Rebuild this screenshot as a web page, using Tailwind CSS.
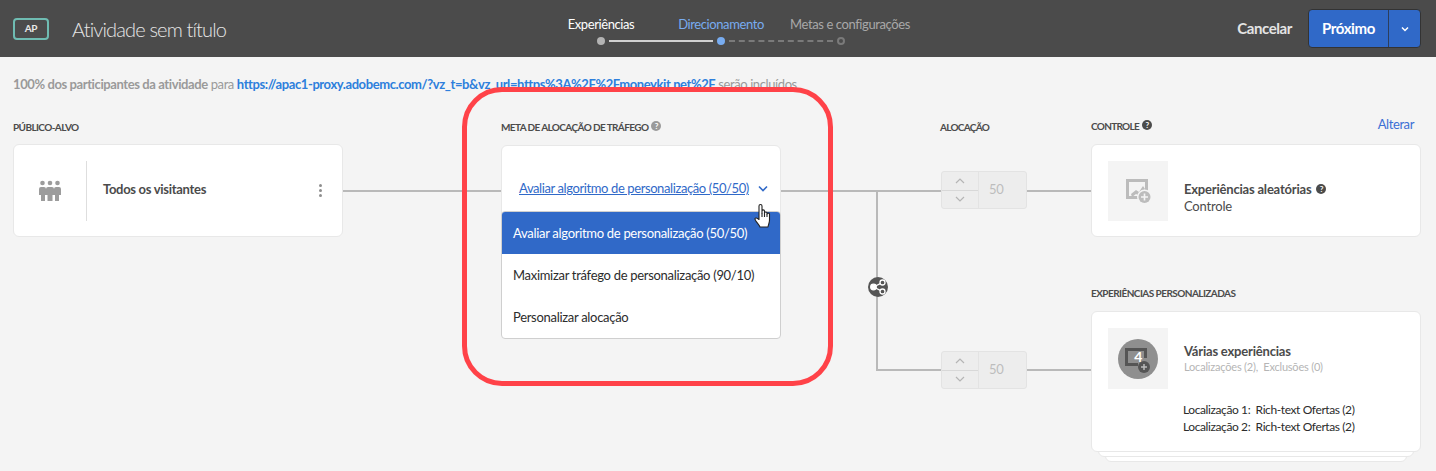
<!DOCTYPE html>
<html lang="pt">
<head>
  <meta charset="UTF-8">
  <title>Atividade sem título</title>
  <script src="https://cdn.jsdelivr.net/npm/@tailwindcss/browser@4"></script>
</head>
<body class="bg-[#f4f4f4] font-['Lato',sans-serif] text-[#4b4b4b] overflow-hidden tracking-[-0.4px]">
  <!-- Header -->
  <header class="h-[57px] bg-[#4b4b4b] flex items-center">
    <div class="w-[541px] flex items-center pl-[13px]">
      <div class="w-[36px] h-[22px] border-2 border-[#6fbcb2] rounded-[4px] flex items-center justify-center text-[10px] font-bold text-[#e8e8e8]">AP</div>
      <span class="ml-[23px] text-[20px] font-light text-[#e6e6e6] tracking-[-0.85px]">Atividade sem título</span>
    </div>
    <!-- Stepper -->
    <div class="w-[360px] grid grid-cols-3 self-start pt-[16px]">
      <div class="flex flex-col items-center">
        <span class="text-[13px] leading-[17px] text-white whitespace-nowrap">Experiências</span>
        <div class="mt-[3px] h-[10px] w-full flex items-center justify-center relative">
          <span class="w-[8px] h-[8px] rounded-full bg-[#b3b3b3]"></span>
          <span class="absolute left-[68px] w-[104px] h-[2px] bg-[#d0d0d0]"></span>
        </div>
      </div>
      <div class="flex flex-col items-center">
        <span class="text-[13px] leading-[17px] text-[#78acf0] whitespace-nowrap">Direcionamento</span>
        <div class="mt-[3px] h-[10px] w-full flex items-center justify-center relative">
          <span class="w-[8px] h-[8px] rounded-full bg-[#78acf0]"></span>
          <span class="absolute left-[68px] w-[104px] border-t-2 border-dashed border-[#7a7a7a]"></span>
        </div>
      </div>
      <div class="flex flex-col items-center">
        <span class="text-[13px] leading-[17px] text-[#a8a8a8] whitespace-nowrap ml-[18px]">Metas e configurações</span>
        <div class="mt-[3px] h-[10px] w-full flex items-center justify-center">
          <span class="w-[8px] h-[8px] rounded-full border-2 border-[#7a7a7a]"></span>
        </div>
      </div>
    </div>
    <div class="flex-1 flex items-center justify-end pr-[15px]">
      <span class="text-[15px] font-bold text-[#e4e4e4] mr-[16px]">Cancelar</span>
      <div class="h-[39px] w-[113px] flex rounded-[4px] bg-[#3069c8] border border-[#333] text-white">
        <span class="w-[80px] flex items-center justify-center text-[15px] font-bold border-r border-[#2c3e5c]">Próximo</span>
        <span class="flex-1 flex items-center justify-center">
          <svg width="8" height="6" viewBox="0 0 8 6" fill="none" stroke="#fff" stroke-width="1.5"><path d="M1 1.5l3 3 3-3"/></svg>
        </span>
      </div>
    </div>
  </header>

  <main class="relative h-[414px]">
    <!-- Connectors -->
    <div class="absolute left-[343px] top-[133px] w-[748px] h-[2px] bg-[#b9b9b9]"></div>
    <div class="absolute left-[876px] top-[134px] w-[2px] h-[179px] bg-[#b9b9b9]"></div>
    <div class="absolute left-[876px] top-[312px] w-[215px] h-[2px] bg-[#b9b9b9]"></div>
    <div class="absolute left-[868px] top-[220px] w-[20px] h-[20px] rounded-full bg-[#555]">
      <svg width="20" height="20" viewBox="0 0 20 20" fill="none" stroke="#fff" stroke-width="1.3">
        <circle cx="5.5" cy="10" r="2.8" fill="#fff"/><circle cx="14.5" cy="5.5" r="2.5"/><circle cx="14.5" cy="14.5" r="2.5"/><path d="M7.5 9l4.800-2.400M7.5 11l4.800 2.400"/>
      </svg>
    </div>

    <p class="h-[61px] pl-[13px] pt-[18px] text-[13px] leading-[18px] text-[#9a9a9a] whitespace-nowrap"><b>100% dos participantes da atividade</b> para <a class="font-bold text-[#2d7fdc]">https://apac1-proxy.adobemc.com/?vz_t=b&amp;vz_url=https%3A%2F%2Fmoneykit.net%2F</a> serão incluídos</p>

    <div class="relative flex pl-[13px]">
      <!-- Público-alvo -->
      <section class="w-[330px]">
        <h2 class="h-[26px] pt-[3px] text-[10px] leading-[12px] font-bold tracking-[-0.6px]">PÚBLICO-ALVO</h2>
        <div class="h-[93px] bg-white border border-[#e8e8e8] rounded-[6px] flex items-center">
          <div class="w-[73px] h-[60px] border-r border-[#dedede] flex items-center justify-center">
            <svg width="22" height="22" viewBox="0 0 22 22" fill="#9c9c9c">
              <circle cx="3.5" cy="3" r="2.3"/><circle cx="11" cy="3" r="2.3"/><circle cx="18.500" cy="3" r="2.300"/>
              <path d="M2 7h3q2 0 2 2v6H6v6H2v-6H0V9q0-2 2-2z"/>
              <path d="M9 7h4q2 0 2 2v6h-1.500v6h-5v-6H7V9q0-2 2-2z"/>
              <path d="M17 7h3q2 0 2 2v6h-2v6h-4v-6h-1V9q0-2 2-2z"/>
            </svg>
          </div>
          <span class="ml-[16px] -mt-[2px] text-[13px] font-bold flex-1 tracking-[-0.3px]">Todos os visitantes</span>
          <div class="mr-[20px] flex flex-col gap-[2px]">
            <span class="w-[3px] h-[3px] rounded-full bg-[#8e8e8e]"></span>
            <span class="w-[3px] h-[3px] rounded-full bg-[#8e8e8e]"></span>
            <span class="w-[3px] h-[3px] rounded-full bg-[#8e8e8e]"></span>
          </div>
        </div>
      </section>

      <!-- Meta de alocação -->
      <section class="w-[280px] ml-[158px]">
        <h2 class="h-[27px] pt-[3px] text-[10px] leading-[12px] font-bold flex items-start gap-[3px] whitespace-nowrap tracking-[-0.6px]">META DE ALOCAÇÃO DE TRÁFEGO
          <span class="w-[10px] h-[10px] rounded-full bg-[#9a9a9a] text-white text-[8px] leading-[10px] text-center">?</span>
        </h2>
        <div class="relative h-[92px] bg-white border border-[#e8e8e8] rounded-[6px]">
          <div class="absolute left-[17px] top-[32px] flex items-center whitespace-nowrap text-[13px] leading-[20px] text-[#3069c8]">
            <span class="underline">Avaliar algoritmo de personalização (50/50)</span>
            <svg class="ml-[9px]" width="10" height="7" viewBox="0 0 10 7" fill="none" stroke="#3069c8" stroke-width="1.6"><path d="M1 1.5l4 4 4-4"/></svg>
          </div>
          <!-- Dropdown -->
          <div class="absolute -left-px top-[65px] w-[280px] bg-white border border-[#cfcfcf] rounded-[4px] overflow-hidden text-[13px] text-[#2c2c2c] tracking-[-0.3px]">
            <div class="h-[42px] flex items-center pl-[11px] pt-[2px] bg-[#3069c8] text-white">Avaliar algoritmo de personalização (50/50)</div>
            <div class="h-[42px] flex items-center pl-[11px] pt-[2px]">Maximizar tráfego de personalização (90/10)</div>
            <div class="h-[42px] flex items-center pl-[11px] pt-[2px]">Personalizar alocação</div>
          </div>
        </div>
      </section>

      <!-- Alocação -->
      <section class="w-[87px] ml-[159px]">
        <h2 class="h-[26px] pt-[3px] text-[10px] leading-[12px] font-bold tracking-[-0.7px]">ALOCAÇÃO</h2>
        <div class="ml-px mt-[27px] h-[38px] flex bg-[#ededed] border border-[#e3e3e3] rounded-[3px] text-[#bdbdbd]">
          <div class="w-[37px] flex flex-col border-r border-[#e3e3e3]">
            <span class="flex-1 flex items-center justify-center border-b border-[#d8d8d8]"><svg width="10" height="6" viewBox="0 0 10 6" fill="none" stroke="#b5b5b5" stroke-width="1.2"><path d="M1 5l4-4 4 4"/></svg></span>
            <span class="flex-1 flex items-center justify-center"><svg width="10" height="6" viewBox="0 0 10 6" fill="none" stroke="#b5b5b5" stroke-width="1.2"><path d="M1 1l4 4 4-4"/></svg></span>
          </div>
          <span class="pl-[10px] flex items-center text-[13px]">50</span>
        </div>
        <div class="ml-px mt-[142px] h-[38px] flex bg-[#ededed] border border-[#e3e3e3] rounded-[3px] text-[#bdbdbd]">
          <div class="w-[37px] flex flex-col border-r border-[#e3e3e3]">
            <span class="flex-1 flex items-center justify-center border-b border-[#d8d8d8]"><svg width="10" height="6" viewBox="0 0 10 6" fill="none" stroke="#b5b5b5" stroke-width="1.2"><path d="M1 5l4-4 4 4"/></svg></span>
            <span class="flex-1 flex items-center justify-center"><svg width="10" height="6" viewBox="0 0 10 6" fill="none" stroke="#b5b5b5" stroke-width="1.2"><path d="M1 1l4 4 4-4"/></svg></span>
          </div>
          <span class="pl-[10px] flex items-center text-[13px]">50</span>
        </div>
      </section>

      <!-- Controle / Experiências -->
      <section class="w-[330px] ml-[64px]">
        <div class="h-[26px] flex items-start justify-between pr-[7px]">
          <h2 class="pt-[2px] text-[10px] leading-[12px] font-bold flex gap-[3px] tracking-[-0.7px]">CONTROLE <span class="w-[10px] h-[10px] rounded-full bg-[#4b4b4b] text-white text-[8px] leading-[10px] text-center">?</span></h2>
          <a class="text-[13px] leading-[14px] -mt-[1px] text-[#3b6fd4]">Alterar</a>
        </div>
        <div class="h-[93px] bg-white border border-[#e8e8e8] rounded-[6px] flex items-center pl-[16px]">
          <div class="w-[60px] h-[60px] bg-[#f4f4f4]">
            <svg width="60" height="60" viewBox="0 0 60 60">
              <path d="M18 18h22v12h-3v-9H21v14h10v3H18z" fill="#bcbcbc"/>
              <path d="M23 33l5-4 3 2 4-6 2 3-5 7-4-2-4 3z" fill="#bcbcbc"/>
              <circle cx="36.500" cy="36" r="7.500" fill="#f4f4f4"/>
              <circle cx="36.500" cy="36" r="6" fill="#bcbcbc"/><path d="M36.500 32.500v7M33 36h7" stroke="#f4f4f4" stroke-width="1.6"/>
            </svg>
          </div>
          <div class="ml-[16px] pt-[14px] text-[13px] leading-[17px] tracking-[-0.2px]">
            <div class="font-bold flex items-center gap-[5px]">Experiências aleatórias <span class="w-[10px] h-[10px] rounded-full bg-[#4b4b4b] text-white text-[8px] leading-[10px] text-center">?</span></div>
            <div>Controle</div>
          </div>
        </div>

        <h2 class="mt-[48px] h-[26px] pt-[2px] text-[10px] leading-[12px] font-bold tracking-[-0.55px]">EXPERIÊNCIAS PERSONALIZADAS</h2>
        <div class="relative">
          <div class="relative z-20 h-[141px] bg-white border border-[#e8e8e8] rounded-[6px] pl-[16px] pt-[16px]">
            <div class="flex">
              <div class="w-[60px] h-[61px] bg-[#f4f4f4] flex items-center justify-center">
                <div class="relative w-[40px] h-[40px] rounded-full bg-[#8f8f8f] flex items-center justify-center">
                  <svg class="absolute left-0 top-0" width="40" height="40" viewBox="0 0 40 40">
                    <path d="M7 9h22v10h-3v-7H10v12h10v3H7z" fill="#555"/>
                    <circle cx="26" cy="28" r="6" fill="#555"/><path d="M26 25v6M23 28h6" stroke="#bbb" stroke-width="1.5"/>
                  </svg>
                  <span class="relative -mt-[4px] text-[14px] font-bold text-white">4</span>
                </div>
              </div>
              <div class="ml-[16px] pt-[15px]">
                <div class="text-[13px] leading-[17px] font-bold tracking-[-0.2px]">Várias experiências</div>
                <div class="text-[11px] leading-[13px] text-[#b5b5b5] tracking-[-0.2px]">Localizações (2),&nbsp; Exclusões (0)</div>
              </div>
            </div>
            <div class="ml-[75px] mt-[12px] text-[12px] leading-[17px] text-[#2c2c2c]">
              <div>Localização 1:&nbsp; Rich-text Ofertas (2)</div>
              <div>Localização 2:&nbsp; Rich-text Ofertas (2)</div>
            </div>
          </div>
          <div class="relative z-10 mx-[7px] -mt-[4px] h-[9px] bg-white border border-[#e8e8e8] rounded-b-[6px]"></div>
          <div class="mx-[14px] -mt-[4px] h-[9px] bg-white border border-[#e8e8e8] rounded-b-[6px]"></div>
        </div>
      </section>
    </div>

    <!-- Red highlight and cursor, on top of the page -->
    <div class="absolute left-[462px] top-[30px] w-[371px] h-[299px] border-[5px] border-[#ff4248] rounded-[40px] z-30"></div>
    <svg class="absolute left-[753px] top-[146px] z-30" width="20" height="26" viewBox="0 0 20 26" fill="#fff" stroke="#222" stroke-width="1.1" stroke-linejoin="round">
      <path d="M6 13V3c0-2 3-2 3 0v7V8c0-1.500 2.500-1.500 2.500 0v2c0-1.400 2.500-1.400 2.500 0v1c0-1.200 2.500-1.200 2.500 0v6c0 3-1 4-1.500 7H7c-.5-2-5-6-5-8 0-1.500 2-1.500 4 .5z"/>
      <path d="M9 10v4M11.500 10v4M14 11v3" fill="none"/>
    </svg>
  </main>
</body>
</html>
